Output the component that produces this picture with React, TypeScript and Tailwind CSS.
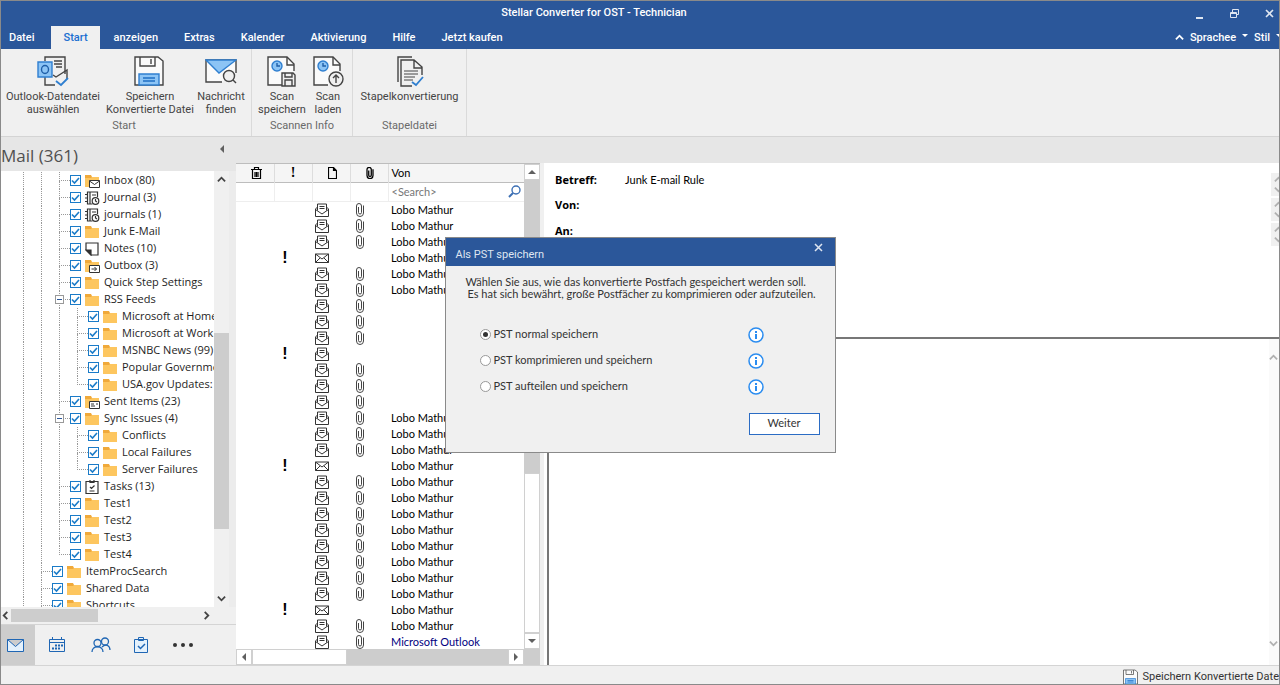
import { useState } from 'react';
import type { ReactNode } from 'react';

type Guide = 'line' | 'branch' | 'end';
type FolderIcon = 'folder' | 'inbox' | 'journal' | 'note' | 'outbox' | 'sent' | 'tasks';

interface TreeItem {
  name: string;
  icon: FolderIcon;
  guides: Guide[];
  open?: boolean;
}

const tree: TreeItem[] = [
  { name: 'Inbox (80)', icon: 'inbox', guides: ['line', 'line', 'branch'] },
  { name: 'Journal (3)', icon: 'journal', guides: ['line', 'line', 'branch'] },
  { name: 'journals (1)', icon: 'journal', guides: ['line', 'line', 'branch'] },
  { name: 'Junk E-Mail', icon: 'folder', guides: ['line', 'line', 'branch'] },
  { name: 'Notes (10)', icon: 'note', guides: ['line', 'line', 'branch'] },
  { name: 'Outbox (3)', icon: 'outbox', guides: ['line', 'line', 'branch'] },
  { name: 'Quick Step Settings', icon: 'folder', guides: ['line', 'line', 'branch'] },
  { name: 'RSS Feeds', icon: 'folder', guides: ['line', 'line', 'branch'], open: true },
  { name: 'Microsoft at Home', icon: 'folder', guides: ['line', 'line', 'line', 'branch'] },
  { name: 'Microsoft at Work', icon: 'folder', guides: ['line', 'line', 'line', 'branch'] },
  { name: 'MSNBC News (99)', icon: 'folder', guides: ['line', 'line', 'line', 'branch'] },
  { name: 'Popular Government', icon: 'folder', guides: ['line', 'line', 'line', 'branch'] },
  { name: 'USA.gov Updates: ', icon: 'folder', guides: ['line', 'line', 'line', 'end'] },
  { name: 'Sent Items (23)', icon: 'sent', guides: ['line', 'line', 'branch'] },
  { name: 'Sync Issues (4)', icon: 'folder', guides: ['line', 'line', 'branch'], open: true },
  { name: 'Conflicts', icon: 'folder', guides: ['line', 'line', 'line', 'branch'] },
  { name: 'Local Failures', icon: 'folder', guides: ['line', 'line', 'line', 'branch'] },
  { name: 'Server Failures', icon: 'folder', guides: ['line', 'line', 'line', 'end'] },
  { name: 'Tasks (13)', icon: 'tasks', guides: ['line', 'line', 'branch'] },
  { name: 'Test1', icon: 'folder', guides: ['line', 'line', 'branch'] },
  { name: 'Test2', icon: 'folder', guides: ['line', 'line', 'branch'] },
  { name: 'Test3', icon: 'folder', guides: ['line', 'line', 'branch'] },
  { name: 'Test4', icon: 'folder', guides: ['line', 'line', 'end'] },
  { name: 'ItemProcSearch', icon: 'folder', guides: ['line', 'branch'] },
  { name: 'Shared Data', icon: 'folder', guides: ['line', 'branch'] },
  { name: 'Shortcuts', icon: 'folder', guides: ['line', 'branch'] },
];

// Filas sin remitente y filas marcadas como importantes
const unnamed = [6, 7, 8, 9, 10, 11, 12];
const important = [3, 9, 16, 25];
const closed = [3, 16, 25];

const mails = Array.from({ length: 28 }, (_, i) => ({
  from: i === 27 ? 'Microsoft Outlook' : unnamed.includes(i) ? '' : 'Lobo Mathur',
  important: important.includes(i),
  closed: closed.includes(i),
  attachment: !important.includes(i),
}));

const tabs = ['anzeigen', 'Extras', 'Kalender', 'Aktivierung', 'Hilfe', 'Jetzt kaufen'];

const options = ['PST normal speichern', 'PST komprimieren und speichern', 'PST aufteilen und speichern'];

/* ---------- Iconos ---------- */

function SaveIcon({ className }: { className: string }) {
  return (
    <svg viewBox="0 0 32 32" className={className} fill="none" stroke="#444" strokeWidth="1.4">
      <path d="M1 2h23l5 4v24H1z" fill="#fafafa" />
      <path d="M6 2v9h15V2M17 4v5" />
      <path d="M5 19h20v11H5z" fill="#8cc4f5" stroke="#2f7fd0" />
      <path d="M9 23h12M9 26h12" stroke="#1f6fc4" />
    </svg>
  );
}

function OutlookIcon() {
  return (
    <svg viewBox="0 0 32 32" className="size-8" fill="none" stroke="#444" strokeWidth="1.4">
      <path d="M8 6V2h20v17M8 22v8h10" />
      <path d="M17 6h8M17 9h8M19 12h6" />
      <path d="M16 20l3 2 11-7v9" />
      <path d="M1 7h14v15H1z" fill="#8cc4f5" stroke="#2f7fd0" />
      <ellipse cx="8" cy="14.500" rx="3.500" ry="4" stroke="#1f5fa8" />
      <path d="M19 26l5 4 7-7" stroke="#2f7fd0" strokeWidth="1.800" />
    </svg>
  );
}

function FindMailIcon() {
  return (
    <svg viewBox="0 0 32 32" className="size-8" fill="none" stroke="#444" strokeWidth="1.4">
      <path d="M17 27H1V5h30v13" fill="#fafafa" />
      <path d="M1 5h30L14 18z" fill="#8cc4f5" stroke="#2f7fd0" />
      <circle cx="24" cy="21" r="5.500" fill="#f0f0f0" />
      <path d="M28 25l3 3" />
    </svg>
  );
}

function ScanPage({ children }: { children: ReactNode }) {
  return (
    <svg viewBox="0 0 32 32" className="size-8" fill="none" stroke="#444" strokeWidth="1.4">
      <path d="M28 16V9l-7-7H2v28h14" fill="#fafafa" />
      <path d="M21 2v8h7" />
      <circle cx="11" cy="11" r="5" fill="#8cc4f5" stroke="#2f7fd0" />
      <path d="M11 8v3h3" stroke="#1f5fa8" />
      {children}
    </svg>
  );
}

function BatchIcon() {
  return (
    <svg viewBox="0 0 32 32" className="size-8" fill="none" stroke="#444" strokeWidth="1.4">
      <path d="M4 27V2h14" />
      <path d="M28 20V12l-8-7H7v26h11M20 5v8h8" />
      <path d="M10 16h14M10 19h14M10 22h11M10 25h9" strokeWidth="1.200" />
      <path d="M18 27l4 3 7-8" stroke="#2f7fd0" strokeWidth="1.800" />
    </svg>
  );
}

function TreeIcon({ kind }: { kind: FolderIcon }) {
  if (kind === 'journal') {
    return (
      <svg viewBox="0 0 15 14" className="h-[14px] w-[15px] shrink-0" fill="none" stroke="#333" strokeWidth="1.200">
        <path d="M12.500 6V1h-10v12h5M2 3.500H0M2 7H0M2 10.500H0M5 1v12M7 4h4" />
        <circle cx="10.500" cy="10" r="3.300" fill="#fff" />
        <path d="M10.500 8v2l1.500 1" />
      </svg>
    );
  }
  if (kind === 'note') {
    return (
      <svg viewBox="0 0 15 14" className="h-[14px] w-[15px] shrink-0" fill="#fff" stroke="#333" strokeWidth="1.200">
        <path d="M1 1h12v12H6L1 8z" />
        <path d="M1 8h5v5z" fill="#333" />
      </svg>
    );
  }
  if (kind === 'tasks') {
    return (
      <svg viewBox="0 0 15 14" className="h-[14px] w-[15px] shrink-0" fill="none" stroke="#333" strokeWidth="1.200">
        <path d="M1 1.500h12v12H1zM5 0v2.500h4V0M5 7l1.500 1.500 3-3M4.500 11h5" />
      </svg>
    );
  }
  return (
    <svg viewBox="0 0 15 14" className="h-[14px] w-[15px] shrink-0">
      <path d="M0 1h6l1 2h7v10H0z" fill="#f0a93a" />
      <path d="M0 4h6l1-1h7v10H0z" fill="#fdc65f" />
      {kind !== 'folder' && <path d="M4.500 6.500h10v7h-10z" fill="#fff" stroke="#333" />}
      {kind === 'inbox' && <path d="M4.500 7l5 3.500 5-3.500" fill="none" stroke="#333" />}
      {kind === 'outbox' && <path d="M6.500 10h5M9.500 8l2 2-2 2" fill="none" stroke="#333" />}
      {kind === 'sent' && <path d="M6 9h3M6 11h4M11 9h2" fill="none" stroke="#333" />}
    </svg>
  );
}

function MailIcon({ closed }: { closed: boolean }) {
  return closed ? (
    <svg viewBox="0 0 14 14" className="size-[14px]" fill="none" stroke="#333">
      <path d="M.5 3h13v8.500H.5zM.5 3L7 8l6.500-5M.5 11.500L5 7M13.500 11.500L9 7" />
    </svg>
  ) : (
    <svg viewBox="0 0 14 14" className="size-[14px]" fill="none" stroke="#333">
      <path d="M2.500 4L.5 6v7.500h13V6l-2-2M.5 6.500L7 11l6.500-4.500" />
      <path d="M2.500 7.500V1h9v6.500M4.500 3.500h5M4.500 5.500h5" />
    </svg>
  );
}

function ClipIcon({ className }: { className: string }) {
  return (
    <svg viewBox="0 0 8 14" className={className} fill="none" stroke="currentColor">
      <path d="M2.500 4v5.500a1.500 1.500 0 0 0 3 0V3a2.500 2.500 0 0 0-5 0v7a3.500 3.500 0 0 0 7 0V2.500" />
    </svg>
  );
}

function Chevron({ dir, className = 'stroke-[#444]' }: { dir: 'up' | 'down' | 'left' | 'right'; className?: string }) {
  const paths = {
    up: 'M1 7l4-4 4 4',
    down: 'M1 3l4 4 4-4',
    left: 'M7 1L3 5l4 4',
    right: 'M3 1l4 4-4 4',
  };
  return (
    <svg viewBox="0 0 10 10" className={`size-[9px] shrink-0 fill-none ${className}`} strokeWidth="2">
      <path d={paths[dir]} />
    </svg>
  );
}

function Arrow({ dir }: { dir: 'up' | 'down' | 'left' | 'right' }) {
  const paths = { up: 'M0 6h8L4 2z', down: 'M0 2h8L4 6z', left: 'M6 0v8L2 4z', right: 'M2 0v8l4-4z' };
  return (
    <svg viewBox="0 0 8 8" className="size-2 fill-[#606060]">
      <path d={paths[dir]} />
    </svg>
  );
}

function ArrowButton({ dir }: { dir: 'up' | 'down' | 'left' | 'right' }) {
  return (
    <button
      aria-label={dir}
      className="flex size-4 shrink-0 items-center justify-center border border-[#d0d0d0] bg-white"
    >
      <Arrow dir={dir} />
    </button>
  );
}

/* ---------- Cinta ---------- */

function RibbonButton({ icon, lines, className }: { icon: ReactNode; lines: string[]; className: string }) {
  return (
    <button className={`flex flex-col items-center text-[11px] leading-[13px] text-[#444] ${className}`}>
      {icon}
      <span className="mt-[3px] flex flex-col items-center whitespace-nowrap">
        {lines.map((line) => (
          <span key={line}>{line}</span>
        ))}
      </span>
    </button>
  );
}

function RibbonGroup({ label, children, className }: { label: string; children: ReactNode; className: string }) {
  return (
    <div className={`flex flex-col justify-between border-r border-[#dadada] pt-[6px] pb-[3px] ${className}`}>
      <div className="flex justify-center">{children}</div>
      <div className="text-center text-[11px] leading-[14px] text-[#6a6a6a]">{label}</div>
    </div>
  );
}

function Ribbon() {
  return (
    <div className="flex h-[88px] shrink-0 border-b border-[#d4d4d4] bg-[#f0f0f0] font-['Roboto',sans-serif]">
      <RibbonGroup label="Start" className="w-[251px] pr-1">
        <RibbonButton icon={<OutlookIcon />} lines={['Outlook-Datendatei', 'auswählen']} className="w-[104px]" />
        <RibbonButton icon={<SaveIcon className="size-8" />} lines={['Speichern', 'Konvertierte Datei']} className="w-[90px]" />
        <RibbonButton icon={<FindMailIcon />} lines={['Nachricht', 'finden']} className="w-[52px]" />
      </RibbonGroup>
      <RibbonGroup label="Scannen Info" className="w-[101px]">
        <RibbonButton
          icon={
            <ScanPage>
              <path d="M16 18h11l2 2v11H16z" fill="#f0f0f0" />
              <path d="M19 18v4h7v-4M19 31v-6h7v6" />
            </ScanPage>
          }
          lines={['Scan', 'speichern']}
          className="w-[52px]"
        />
        <RibbonButton
          icon={
            <ScanPage>
              <circle cx="24" cy="24" r="7" fill="#f0f0f0" />
              <path d="M24 28v-8M21 23l3-3 3 3" />
            </ScanPage>
          }
          lines={['Scan', 'laden']}
          className="w-[40px]"
        />
      </RibbonGroup>
      <RibbonGroup label="Stapeldatei" className="w-[114px]">
        <RibbonButton icon={<BatchIcon />} lines={['Stapelkonvertierung']} className="w-[110px]" />
      </RibbonGroup>
    </div>
  );
}

function TitleBar() {
  return (
    <header className="h-12 shrink-0 bg-[#2b579a] font-['Roboto',sans-serif] text-[11px] font-medium text-white">
      <div className="flex h-[25px] items-center">
        <h1 className="flex-1 text-center">Stellar Converter for OST - Technician</h1>
        <div className="flex w-[92px] items-center justify-between pr-[5px] pl-[9px]">
          <button aria-label="Minimieren" className="flex h-[10px] w-2 items-end">
            <span className="h-[2px] w-[7px] bg-[#dfe6f1]" />
          </button>
          <button aria-label="Wiederherstellen">
            <svg viewBox="0 0 9 9" className="size-[9px] fill-none stroke-[#dfe6f1]">
              <path d="M.5 3.500h6v5h-6zM2.500 3.500v-3h6v5h-2M.5 4.500h6" />
            </svg>
          </button>
          <button aria-label="Schließen">
            <svg viewBox="0 0 9 9" className="size-[9px] stroke-[#dfe6f1]" strokeWidth="1.600">
              <path d="M1 1l7 7M8 1L1 8" />
            </svg>
          </button>
        </div>
      </div>
      <nav className="flex h-[23px] items-stretch leading-6">
        <button className="pr-[17px] pl-2">Datei</button>
        <button className="bg-[#f0f0f0] px-3 text-[#1a6fd0]">Start</button>
        <div className="ml-px flex">
          {tabs.map((tab) => (
            <button key={tab} className="px-[13px] whitespace-nowrap">
              {tab}
            </button>
          ))}
        </div>
        <div className="ml-auto flex items-center gap-[6px]">
          <Chevron dir="up" className="stroke-white" />
          <button>Sprachee</button>
          <span className="mb-1 size-0 border-x-[3px] border-t-[3px] border-x-transparent border-t-white" />
          <button>Stil</button>
          <span className="mb-1 h-0 w-[3px] border-t-[3px] border-l-[3px] border-t-white border-l-transparent" />
        </div>
      </nav>
    </header>
  );
}

/* ---------- Panel de carpetas ---------- */

function GuideCell({ guide, open }: { guide: Guide; open?: boolean }) {
  if (guide === 'line') {
    return <span className="h-full w-[18px] shrink-0 border-l border-dotted border-[#999]" />;
  }
  return (
    <span className="relative flex h-full w-[11px] shrink-0 flex-col">
      <span className="h-[9px] border-b border-l border-dotted border-[#999]" />
      {guide === 'branch' && <span className="flex-1 border-l border-dotted border-[#999]" />}
      {open && (
        <span className="absolute top-1 -left-1 flex size-[9px] items-center justify-center border border-[#999] bg-white">
          <span className="h-px w-[5px] bg-[#2b579a]" />
        </span>
      )}
    </span>
  );
}

function TreeRow({ item }: { item: TreeItem }) {
  return (
    <li className="flex h-[17px] items-center pl-[22px]">
      {item.guides.map((guide, i) => (
        <GuideCell key={i} guide={guide} open={item.open} />
      ))}
      <label className="flex items-center whitespace-nowrap">
        <span className="grid shrink-0 place-items-center">
          <input
            type="checkbox"
            defaultChecked
            className="peer col-start-1 row-start-1 size-[11px] appearance-none border border-[#1a7bc8] bg-white"
          />
          <svg
            viewBox="0 0 9 9"
            className="invisible col-start-1 row-start-1 size-[9px] fill-none stroke-[#1a7bc8] peer-checked:visible"
            strokeWidth="1.600"
          >
            <path d="M1 4.500L3.500 7 8 2" />
          </svg>
        </span>
        <span className="w-1" />
        <TreeIcon kind={item.icon} />
        <span className="ml-1">{item.name}</span>
      </label>
    </li>
  );
}

function Sidebar() {
  return (
    <aside className="flex w-[235px] shrink-0 flex-col bg-[#e6e6e6]">
      <div className="flex h-[34px] shrink-0 justify-between pr-[10px]">
        <h2 className="mt-[7px] text-[17px] leading-6 text-[#505050]">Mail (361)</h2>
        <button aria-label="Einklappen" className="h-6">
          <Arrow dir="left" />
        </button>
      </div>
      <div className="flex min-h-0 flex-1">
        <ul className="min-w-0 flex-1 overflow-hidden bg-white pt-px text-[11px] text-[#1e1e1e]">
          {tree.map((item) => (
            <TreeRow key={item.name} item={item} />
          ))}
        </ul>
        <div className="flex w-[15px] flex-col items-center bg-[#f0f0f0] py-1">
          <Chevron dir="up" />
          <div className="grow-[147]" />
          <div className="w-full grow-[194] bg-[#cdcdcd]" />
          <div className="grow-[64]" />
          <Chevron dir="down" />
        </div>
        <div className="w-[7px] bg-[#ececec]" />
      </div>
      <div className="flex h-[17px] shrink-0 items-center bg-[#f0f0f0] pr-[25px]">
        <Chevron dir="left" />
        <div className="ml-px h-[13px] w-[87px] bg-[#cdcdcd]" />
        <Chevron dir="right" className="ml-auto stroke-[#444]" />
      </div>
      <nav className="flex h-[41px] shrink-0 border-t border-[#d4d4d4] bg-[#f0f0f0] text-[#1f66b4]">
        <button aria-label="Mail" className="flex w-[34px] items-center justify-center bg-[#cdcdcd] pr-[5px]">
          <svg viewBox="0 0 17 13" className="h-[13px] w-[17px] fill-[#e4f1fc] stroke-current">
            <path d="M.5.5h16v12H.5zM.5.5l8 7 8-7" />
          </svg>
        </button>
        <button aria-label="Kalender" className="flex w-[43px] items-center justify-center">
          <svg viewBox="0 0 16 16" className="size-4 fill-none stroke-current">
            <path d="M.5 2.500h15v12H.5zM.5 5.500h15M3.500 0v3M12.500 0v3" />
            <path d="M6 8.500h8M3 11.500h8" strokeWidth="2" strokeDasharray="2 1" />
          </svg>
        </button>
        <button aria-label="Kontakte" className="flex w-[45px] items-center justify-center">
          <svg viewBox="0 0 20 16" className="h-4 w-5 fill-none stroke-current" strokeWidth="1.300">
            <circle cx="6.500" cy="6" r="3.500" />
            <circle cx="14" cy="4.500" r="3.500" />
            <path d="M1 15c0-7 11-7 11 0M11 10c4-4 8-1 8 3" />
          </svg>
        </button>
        <button aria-label="Aufgaben" className="flex w-[35px] items-center justify-center">
          <svg viewBox="0 0 14 16" className="h-4 w-[14px] fill-[#e4f1fc] stroke-current">
            <path d="M.5 2.500h13v13H.5zM4.500.5h5v3h-5z" />
            <path d="M4 9l2.500 2.500L11 7" fill="none" strokeWidth="1.500" />
          </svg>
        </button>
        <button aria-label="Mehr" className="flex w-[49px] items-center justify-center gap-1">
          <span className="size-1 rounded-full bg-[#333]" />
          <span className="size-1 rounded-full bg-[#333]" />
          <span className="size-1 rounded-full bg-[#333]" />
        </button>
      </nav>
    </aside>
  );
}

/* ---------- Lista de mensajes ---------- */

function MailList() {
  return (
    <section className="flex w-[304px] shrink-0 flex-col border-t border-[#bdbdbd] bg-white font-['Lato',sans-serif]">
      <div className="flex min-h-0 flex-1">
        <div className="min-w-0 flex-1 overflow-hidden">
          <table className="w-full table-fixed border-collapse text-[11px] text-black">
            <thead>
              <tr className="h-[18px] border-b border-[#bdbdbd] bg-[#f5f5f5] text-left [&>th]:border-r [&>th]:border-[#ddd] [&>th]:p-0 [&>th]:font-normal">
                <th aria-label="Löschen" className="w-[38px]">
                  <svg viewBox="0 0 11 12" className="ml-[15px] h-3 w-[11px] fill-none stroke-black" strokeWidth="1.200">
                    <path d="M0 2.500h11M3.500 2V.5h4V2M1.500 3v8.500h8V3M4 5v5M5.500 5v5M7 5v5" />
                  </svg>
                </th>
                <th className="w-[38px] text-center font-['Liberation_Serif',serif]">
                  <b className="text-[14px] leading-4">!</b>
                </th>
                <th aria-label="Typ" className="w-[38px]">
                  <svg viewBox="0 0 9 12" className="ml-[15px] h-3 w-[9px] fill-none stroke-black" strokeWidth="1.200">
                    <path d="M.5.500h5l3 3v8h-8zM5.500.5v3h3" />
                  </svg>
                </th>
                <th aria-label="Anlage" className="w-[38px]">
                  <ClipIcon className="ml-[15px] h-3 w-2 stroke-[1.5]" />
                </th>
                <th className="border-r-0! pl-[3px]!">Von</th>
              </tr>
              <tr className="h-[19px] border-b border-[#eee] [&>td]:border-r [&>td]:border-[#eee] [&>td]:p-0">
                <td />
                <td />
                <td />
                <td />
                <td className="border-r-0!">
                  <label className="flex items-center pr-[3px] pl-[3px]">
                    <input
                      type="text"
                      aria-label="Search"
                      placeholder="<Search>"
                      className="w-0 min-w-0 flex-1 leading-4 outline-none placeholder:text-[#777]"
                    />
                    <svg viewBox="0 0 13 13" className="size-[13px] fill-none stroke-[#3c6fb4]" strokeWidth="1.400">
                      <circle cx="8" cy="5" r="4" />
                      <path d="M5 8l-4 4" strokeWidth="2" />
                    </svg>
                  </label>
                </td>
              </tr>
            </thead>
            <tbody>
              {mails.map((mail, i) => (
                <tr key={i} className="h-4 [&>td]:p-0">
                  <td />
                  <td className="text-center font-['Liberation_Sans',sans-serif] text-[16px] leading-4 font-bold">
                    <span className="pr-4">{mail.important ? '!' : ''}</span>
                  </td>
                  <td>
                    <span className="block pl-[3px]">
                      <MailIcon closed={mail.closed} />
                    </span>
                  </td>
                  <td>{mail.attachment && <ClipIcon className="ml-[6px] h-[14px] w-2 text-[#444]" />}</td>
                  <td className={`leading-4 whitespace-nowrap ${i === 27 ? 'text-[#000080]' : ''}`}>
                    <span className="pl-[3px]">{mail.from}</span>
                  </td>
                </tr>
              ))}
            </tbody>
          </table>
        </div>
        <div className="flex w-4 flex-col">
          <ArrowButton dir="up" />
          <div className="grow-[296] bg-[#cdcdcd]" />
          <div className="grow-[159] border border-[#d0d0d0] bg-white" />
          <ArrowButton dir="down" />
        </div>
      </div>
      <div className="flex h-4 shrink-0 bg-[#cdcdcd] pr-4">
        <ArrowButton dir="left" />
        <div className="w-[95px] border border-[#d0d0d0] bg-white" />
        <div className="flex-1" />
        <ArrowButton dir="right" />
      </div>
    </section>
  );
}

/* ---------- Vista previa ---------- */

function Spinner() {
  return (
    <div className="flex h-[23px] w-2 flex-col justify-between overflow-hidden bg-[#f0f0f0] py-[2px] pl-[3px]">
      <Chevron dir="up" className="stroke-[#b0b0b0]" />
      <Chevron dir="down" className="stroke-[#b0b0b0]" />
    </div>
  );
}

function Preview() {
  return (
    <section className="flex min-w-0 flex-1 flex-col border-l-4 border-[#f0f0f0] bg-white">
      <div className="flex h-[174px] shrink-0 justify-between pt-1 text-[11px]">
        <dl className="grid h-[77px] grid-cols-[70px_1fr] items-center pl-[11px] leading-4">
          <dt className="font-bold">Betreff:</dt>
          <dd className="font-['Lato',sans-serif]">Junk E-mail Rule</dd>
          <dt className="font-bold">Von:</dt>
          <dd />
          <dt className="font-bold">An:</dt>
          <dd />
        </dl>
        <div className="flex flex-col gap-[2px] pt-[6px]">
          <Spinner />
          <Spinner />
          <Spinner />
        </div>
      </div>
      <div className="ml-[3px] flex flex-1 justify-end border-t-2 border-l-2 border-[#777]">
        <div className="flex w-[10px] flex-col justify-between bg-[#fafafa] pt-[14px] pb-[17px]">
          <Chevron dir="up" className="stroke-[#b0b0b0]" />
          <Chevron dir="down" className="stroke-[#b0b0b0]" />
        </div>
      </div>
    </section>
  );
}

/* ---------- Diálogo ---------- */

function SaveDialog({ onClose }: { onClose: () => void }) {
  const [choice, setChoice] = useState(0);

  return (
    <div className="fixed inset-0 flex items-center justify-center pt-1">
      <div
        role="dialog"
        aria-label="Als PST speichern"
        className="w-[391px] border border-[#8a8a8a] bg-[#f0f0f0] pb-[17px] font-['Lato',sans-serif] text-[11px] text-[#333]"
      >
        <div className="flex h-7 items-start justify-between bg-[#2b579a] pr-3 pl-[10px] font-['Roboto',sans-serif] text-[#dfe6f1]">
          <span className="mt-[9px] leading-4">Als PST speichern</span>
          <button aria-label="Schließen" onClick={onClose} className="mt-[5px]">
            <svg viewBox="0 0 9 9" className="size-[9px] stroke-[#dfe6f1]" strokeWidth="1.500">
              <path d="M1 1l7 7M8 1L1 8" />
            </svg>
          </button>
        </div>
        <p className="mt-[10px] pl-5 leading-3 whitespace-nowrap">
          Wählen Sie aus, wie das konvertierte Postfach gespeichert werden soll.
          <span className="block pl-[2px]">Es hat sich bewährt, große Postfächer zu komprimieren oder aufzuteilen.</span>
        </p>
        <div className="mt-[22px] pr-[71px] pl-[34px]">
          {options.map((option, i) => (
            <div key={option} className="flex h-[26px] items-center justify-between">
              <label className="flex items-center gap-[3px]">
                <input
                  type="radio"
                  name="pst"
                  checked={choice === i}
                  onChange={() => setChoice(i)}
                  className="grid size-[11px] appearance-none place-content-center rounded-full border border-[#999] bg-white before:size-[5px] before:rounded-full checked:before:bg-[#333]"
                />
                {option}
              </label>
              <button aria-label="Info">
                <svg viewBox="0 0 16 16" className="size-4 fill-white stroke-[#2a8cf0]" strokeWidth="1.500">
                  <circle cx="8" cy="8" r="7" />
                  <path d="M8 7v5M8 4v2" strokeWidth="2" />
                </svg>
              </button>
            </div>
          ))}
        </div>
        <div className="mt-[13px] flex justify-end pr-[15px]">
          <button className="h-[22px] w-[71px] border border-[#2b6cc4] bg-white">Weiter</button>
        </div>
      </div>
    </div>
  );
}

export default function App() {
  const [dialogOpen, setDialogOpen] = useState(true);

  return (
    <div className="flex h-screen flex-col overflow-hidden border border-[#8a8a8a] bg-[#f0f0f0] font-['Open_Sans','Noto_Sans',sans-serif]">
      <TitleBar />
      <Ribbon />
      <main className="flex min-h-0 flex-1">
        <Sidebar />
        <div className="flex min-w-0 flex-1 bg-[#e6e6e6] pt-[26px]">
          <MailList />
          <Preview />
        </div>
      </main>
      <footer className="flex h-[19px] shrink-0 items-center justify-end border-t border-[#d4d4d4] pt-1 font-['Roboto',sans-serif] text-[11px] text-[#333]">
        <button className="flex items-center gap-1 whitespace-nowrap">
          <SaveIcon className="size-4" />
          Speichern Konvertierte Date
        </button>
      </footer>
      {dialogOpen && <SaveDialog onClose={() => setDialogOpen(false)} />}
    </div>
  );
}
